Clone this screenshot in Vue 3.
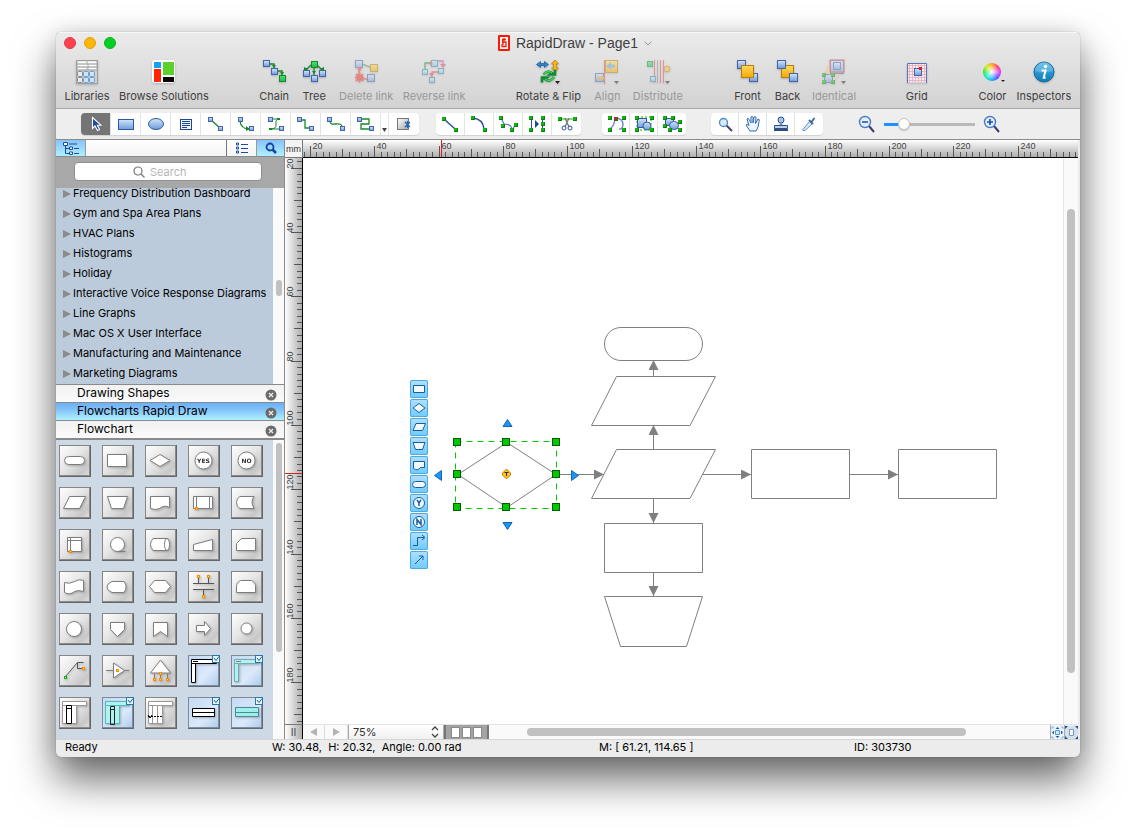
<script setup>
import { computed, onBeforeUnmount, onMounted, ref } from 'vue'

const node = (x, y, s = 5, kind = 'b') => {
  const fill = { b: 'url(#gBlue)', g: 'url(#gGreen)', o: 'url(#gGold)', c: 'url(#gCyan)' }[kind]
  const edge = { b: '#4463a8', g: '#128a32', o: '#b97d10', c: '#3d83a8' }[kind]
  return `<rect x="${x + 0.5}" y="${y + 0.5}" width="${s}" height="${s}" fill="${fill}" stroke="${edge}"/>`
}
const dot = (x, y, color = '#12b212') =>
  `<rect x="${x}" y="${y}" width="4" height="4" fill="${color}"/><path d="M${x + 3.5} ${y}v3.500h-3.500" fill="none" stroke="#0b7d0b"/>`
const wire = (d, color = '#138a28', w = 1.3) => `<path d="${d}" fill="none" stroke="${color}" stroke-width="${w}"/>`
const solid = (d, color) => `<path d="${d}" fill="${color}"/>`
const more = solid('M20 22h5l-2.500 3z', '#222')

const gridCells = [0, 1, 2]
  .map((c) => [0, 1].map((r) => `<rect x="${3.5 + c * 6}" y="${12.5 + r * 6}" width="5" height="5" rx="1" fill="${c ? '#cfe3f6' : '#e9e9e9'}" stroke="${c ? '#6c9fce' : '#8c8c8c'}"/>`).join(''))
  .join('')
const gridLines = [6, 9, 12, 15, 18, 21]
  .map((p) => `<path d="M${p - 0.5} 5v18M4 ${p}.500h18" stroke="#eab4c0" stroke-width="1"/>`)
  .join('')

const art = {
  libraries: `<rect x="2.500" y="1.500" width="21" height="23" fill="#d0d0d0" stroke="#a0a0a0"/><path d="M4 3.500h8m2 0h8M4 6.500h9m2 0h7M4 9.500h8m3 0h7" stroke="#fff" stroke-width="2"/><path d="M3 5h20M3 8h20M3 11h20" stroke="#a0a0a0"/>${gridCells}`,
  browse: `<rect x="1" y="1" width="23" height="23" rx="3" fill="#fff"/><path d="M3 3h7v6H3z" fill="#14a0f5"/><path d="M12 3h11v13H12z" fill="#5bd22c"/><path d="M3 10h7v13H3z" fill="#ff2404"/><path d="M12 18h11v5H12z" fill="#000"/>`,
  chain: wire('M8 5h5v4M17 12h4v5') + solid('M11 6h4l-2 3zM19 13h4l-2 3z', '#138a28') + node(2, 1, 6) + node(10, 9, 6) + node(18, 16, 6, 'g'),
  tree: wire('M10 6l-5 5M16 6l5 5M13 8v8') + solid('M3 8v5l4-3zM23 8v5l-4-3zM11 12h4l-2 3z', '#138a28') + node(10, 2, 6, 'g') + node(2, 11, 6) + node(10, 16, 6) + node(18, 11, 6),
  delete: wire('M9 5l8 3') + wire('M6 8v12h10', '#e4473c', 1.5) + node(2, 1, 7) + node(17, 5, 7, 'o') + node(14, 15, 7) + wire('M3 15l7 7M10 15l-7 7M6.500 13.500v10M2 18.500h9', '#e43326', 2) + '<circle cx="6.500" cy="10" r="2" fill="#e4473c"/>',
  reverse: wire('M4 10V4h6') + wire('M16 2h6v4', '#c04ab5') + wire('M18 13h-7v6', '#e4473c') + node(10, 1, 6, 'c') + node(1, 10, 5, 'c') + node(17, 9, 5, 'c') + node(8, 18, 5, 'c') + solid('M9 2l3 2-3 3zM19 5h6l-3 4zM8 14h5l-2.500 4z', '#d24a55'),
  rotate: '<path d="M1.500 5.500l4-3v2h4v-2l4 3-4 3v-2h-4v2z" fill="#2b86cf" stroke="#125a9c" stroke-width=".7"/><path d="M20 1l3.500 4h-2v4h2L20 13l-3.500-4h2V5h-2z" fill="#f8b81c" stroke="#b97d10" stroke-width=".8"/><path d="M8.500 15.500q4-5 8.500-1.500l-2 1.500h5v-5M19 18q-4 6-9 2l2-1.500H7v5" fill="none" stroke="#128a32" stroke-width="2.600"/><path d="M8.500 15.500q4-5 8.500-1.500M19 18q-4 6-9 2" fill="none" stroke="#3fd45d" stroke-width="1.400"/>' + more,
  align: node(11, 1, 12, 'o') + node(1, 14, 8) + wire('M10.500 1v24', '#dd4a50', 1) + solid('M12 7l5-4v2.500h4v3h-4V11z', '#6aa6d8') + solid('M11 19l-4-3v2H3v2h4v2z', '#f0a51c') + more,
  distribute: wire('M9.500 1v23M15.500 1v23M18.500 1v23', '#dd4a50', 1) + wire('M12.500 1v23', '#8a8a8a', 1) + node(2, 2, 5, 'g') + node(5, 17, 5, 'c') + '<circle cx="22" cy="10" r="3" fill="#f7c437" stroke="#b97d10"/>' + more,
  front: node(2, 1, 8) + node(14, 14, 8) + node(6, 6, 12, 'o'),
  back: node(6, 6, 12, 'o') + node(2, 1, 8) + node(14, 14, 8),
  identical: '<path d="M9 2L3 15l8 7L23 12z" fill="#f4c896"/>' + node(9, 1, 13) + '<rect x="9" y="1" width="14" height="12" fill="none" stroke="#d93b3b"/>' + node(3, 15, 8) + node(12, 3, 7) + dot(1, 14) + dot(10, 14) + dot(1, 21) + dot(10, 21) + more,
  grid: `<rect x="3.500" y="4.500" width="19" height="19" fill="#f3eef5"/>${gridLines}<path d="M3.500 24V4.500h19V24" fill="none" stroke="#5877b8"/>${node(10, 9, 7)}<path d="M15 8h3v3h-3z" fill="#d11f2c"/>`,
  color: '',
  inspectors: '<circle cx="13" cy="13" r="10" fill="url(#gInfo)" stroke="#17689c"/><path d="M4 12a9 9 0 0118 0q-9 3-18 0" fill="#fff" opacity=".22"/><circle cx="14.500" cy="7.500" r="1.700" fill="#fff"/><path d="M10.500 11.500h4l-1.800 7.200h2" fill="none" stroke="#fff" stroke-width="2"/>',

  cursor: '<path d="M8.500 4.500v11l2.500-2.500 2.500 4.500 2-1-2.200-4.300h3.700z" fill="#1f4a9e" stroke="#fff" stroke-width="1.100"/>',
  rect: '<rect x="4.500" y="6.500" width="15" height="10" fill="url(#gBlue)" stroke="#2c5aa6"/>',
  ellipse: '<ellipse cx="12" cy="11" rx="7.500" ry="5.500" fill="url(#gBlue)" stroke="#2c5aa6"/>',
  text: '<rect x="6.500" y="6.500" width="11" height="10" fill="#eef4fc" stroke="#1d4794"/><path d="M8 8.500h8M8 10.500h8M8 12.500h8M8 14.500h5" stroke="#1d4794"/>',
  direct: wire('M7 7l9 8') + node(4, 4, 4) + node(14, 13, 4),
  arc: wire('M6 8q1 8 9 8') + solid('M12 13l4 3-4 2z', '#138a28') + node(4, 4, 4) + node(15, 13, 4),
  bezier: wire('M5 6h11q-5 0-4 5t-6 5h9', '#138a28', 1) + node(4, 4, 4) + node(15, 13, 4) + solid('M13 5h3v2h-3zM5 15h3v2H5z', '#138a28'),
  smart: wire('M6 7h5v8h5') + node(3, 4, 4) + node(15, 13, 4),
  spline: wire('M6 8q0 4 5 3 7-1 7 3') + node(3, 4, 4) + node(16, 13, 4),
  round: wire('M7 6h8v5H7v5h9') + node(3, 4, 4) + node(15, 13, 4),
  add: '<rect x="5.500" y="5.500" width="11" height="11" fill="url(#gGray)" stroke="#777"/><path d="M13 9l5 5M18 9l-5 5M15.500 8v7" stroke="#1a66b8" stroke-width="1.200"/>',
  line: wire('M6 6l11 10', '#2b50a3', 1.5) + dot(4, 4) + dot(16, 15),
  curve: wire('M6 5q10 1 11 11', '#2b50a3', 1.5) + dot(4, 3) + dot(16, 15),
  poly: wire('M5 5l3 6q8 0 8 6l4-6', '#5377bd', 1.2) + dot(3, 3) + dot(5, 11) + dot(14, 15) + dot(18, 10),
  mirror: wire('M6.500 5v12M17.500 5v12', '#2b50a3', 1) + solid('M10 7v8l4-4z', '#1d4794') + dot(4, 3) + dot(4, 15) + dot(16, 3) + dot(16, 9) + dot(16, 15),
  cut: wire('M5 6h14', '#12b212', 1) + wire('M10 5l4 9M14 5l-4 9', '#777', 1.3) + '<circle cx="9" cy="15" r="2" fill="none" stroke="#2b50a3"/><circle cx="15" cy="15" r="2" fill="none" stroke="#2b50a3"/>' + dot(3, 4) + dot(18, 4),
  spline2: wire('M5 16q5-1 6-11 8 0 8 7-1 5-4 4', '#6f8cc8', 1.4) + dot(4, 3) + dot(18, 3) + dot(4, 15) + dot(18, 15) + dot(10, 4, '#d11f2c'),
  union: '<rect x="5.500" y="5.500" width="9" height="9" fill="url(#gBlue)" stroke="#2c5aa6"/><circle cx="15" cy="13" r="4" fill="url(#gBlue)" stroke="#2c5aa6"/><path d="M5 4h14v13H5z" fill="none" stroke="#12b212" stroke-dasharray="2 2"/>' + dot(3, 3) + dot(18, 3) + dot(3, 15) + dot(18, 15),
  combine: '<rect x="5.500" y="5.500" width="8" height="7" fill="url(#gBlue)" stroke="#2c5aa6"/><rect x="9.500" y="8.500" width="9" height="8" rx="4" fill="url(#gBlue)" stroke="#2c5aa6"/>' + dot(3, 3) + dot(11, 3) + dot(3, 11) + dot(18, 7) + dot(8, 15) + dot(18, 15),
  lens: '<path d="M13 12l6 6" stroke="#3f4664" stroke-width="2"/><circle cx="10.500" cy="9.500" r="4" fill="#d6edfc" stroke="#4f87cc" stroke-width="1.300"/>',
  hand: '<path d="M9 18l-4-6q1-2 3 .500L6 6q1-2 2.500 1L10 10V4q1.500-1.500 2 .500V10l1-6q2-1 2 1l-.500 5.500L17 6q2 0 1 2.500L17 14l-2 4z" fill="#eef5fe" stroke="#2c68b6" stroke-width="1"/>',
  stamp: '<circle cx="12" cy="7" r="3" fill="#a9c5e8" stroke="#28508f"/><path d="M10.500 9.500h3v3h-3z" fill="#7899c6"/><path d="M5.500 12.500h13v3h-13z" fill="#bcd1eb" stroke="#28508f"/><path d="M5 16h14v2H5z" fill="#344c75"/>',
  dropper: '<path d="M12.500 8.500l2.500 2.500-7 6.500H6l-.500-.500z" fill="#d8ecfb" stroke="#5f8dc5"/><path d="M12 7l4 4M14.500 9l3-4" stroke="#4b6a9c" stroke-width="2"/>'
}

const toolbar = [
  [['libraries', 'Libraries', 46], ['browse', 'Browse Solutions', 92]],
  [['chain', 'Chain', 32], ['tree', 'Tree', 32], ['delete', 'Delete link', 56, true], ['reverse', 'Reverse link', 64, true]],
  [['rotate', 'Rotate & Flip', 68], ['align', 'Align', 34, true], ['distribute', 'Distribute', 51, true]],
  [['front', 'Front', 32], ['back', 'Back', 32], ['identical', 'Identical', 45, true]],
  [['grid', 'Grid', 24]],
  [['color', 'Color', 31], ['inspectors', 'Inspectors', 56]]
]

const tools = [
  ['cursor', 'rect', 'ellipse', 'text', 'direct', 'arc', 'bezier', 'smart', 'spline', 'round', 'drop', 'add'],
  ['line', 'curve', 'poly', 'mirror', 'cut'],
  ['spline2', 'union', 'combine'],
  ['lens', 'hand', 'stamp', 'dropper']
]
const active = ref('cursor')

const solutions = [
  'Frequency Distribution Dashboard', 'Gym and Spa Area Plans', 'HVAC Plans', 'Histograms', 'Holiday',
  'Interactive Voice Response Diagrams', 'Line Graphs', 'Mac OS X User Interface',
  'Manufacturing and Maintenance', 'Marketing Diagrams'
]
const libraries = ['Drawing Shapes', 'Flowcharts Rapid Draw', 'Flowchart']
const openLibrary = ref('Flowcharts Rapid Draw')

const pin = (x, y, c = '#ff8a00') => `<rect x="${x}" y="${y}" width="3" height="3" fill="${c}" stroke="none"/><rect x="${x + 1}" y="${y + 1}" width="1" height="1" fill="#ffe24a" stroke="none"/>`
const check = '<rect x="24.500" y=".500" width="7" height="7" fill="#e4f3fc" stroke="#2a78a8"/><path d="M26 3l2 2.500L31 1.500" fill="none" stroke="#17618f"/>'
const tiles = [
  ['Terminator', '<rect x="5.500" y="11.500" width="20" height="8" rx="4"/>'],
  ['Process', '<path d="M5.500 9.500h19v12h-19z"/>'],
  ['Decision', '<path d="M15 9.500l10 6-10 6-10-6z"/>'],
  ['Yes', '<circle cx="15.500" cy="15.500" r="8.500"/><text x="15.500" y="18">YES</text>'],
  ['No', '<circle cx="15.500" cy="15.500" r="8.500"/><text x="15.500" y="18">NO</text>'],
  ['Data', '<path d="M10.500 9.500h16l-6 12h-16z"/>'],
  ['Manual operation', '<path d="M5.500 9.500h20l-4 12h-12z"/>'],
  ['Document', '<path d="M5.500 9.500h19v11q-5-3-10 1-4 2-9 0z"/>'],
  ['Predefined process', '<path d="M5.500 9.500h19v12h-19zM8.500 9.500v12M21.500 9.500v12" />' + pin(7, 20)],
  ['Stored data', '<path d="M9 9.500h14q-4 5 0 12H9q-3.500-1.500-3.500-6T9 9.500z"/>'],
  ['Internal storage', '<path d="M8.500 8.500h14v14h-14zM8.500 11.500h14M11.500 8.500v14"/>' + pin(10, 21)],
  ['Sequential data', '<circle cx="15.500" cy="15.500" r="7"/><path d="M15.500 22.500h8"/>'],
  ['Direct data', '<path d="M8 9.500h15q3 6 0 12H8q-5-6 0-12z"/><ellipse cx="22" cy="15.500" rx="2.500" ry="6"/>'],
  ['Manual input', '<path d="M5.500 15.500l19-5v11h-19z"/>'],
  ['Card', '<path d="M10.500 9.500h14v12h-19v-7z"/>'],
  ['Paper tape', '<path d="M5.500 11.500q5 2 10-1 5-3 9-1v11q-5-2-9 0-5 4-10 1z"/>'],
  ['Display', '<path d="M10 10.500h12q4 5 0 11H10q-5-2-5-5.500t5-5.500z"/>'],
  ['Preparation', '<path d="M9.500 9.500h11l5 6-5 6h-11l-5-6z"/>'],
  ['Parallel mode', '<path d="M5 12.500h21M5 18.500h21M10.500 7v5M20.500 7v5M15.500 19v6" stroke="#555"/>' + pin(9, 4) + pin(19, 4) + pin(14, 24)],
  ['Loop limit', '<path d="M9.500 9.500h11q4 2 4 5v7h-19v-7q0-3 4-5z"/>'],
  ['Connector', '<circle cx="15" cy="16" r="7.500"/>'],
  ['Off-page connector', '<path d="M8.500 9.500h14v7l-7 7-7-7z"/>'],
  ['Bookmark', '<path d="M8.500 9.500h14v14l-7-5-7 5z"/>'],
  ['Arrow', '<path d="M8.500 12.500h8v-4l6 7-6 7v-4h-8z"/>'],
  ['On-page connector', '<circle cx="15.500" cy="15.500" r="5.500"/>'],
  ['Callout', '<path d="M6 22L18.500 7.500h6M18.500 7.500v6h5" fill="none" stroke="#555"/>' + pin(5, 21, '#00b515') + pin(23, 12)],
  ['Transfer', '<path d="M4 15.500h23" /><path d="M11.500 8v15l11-7.500z"/>' + pin(14, 14)],
  ['Merge', '<path d="M15.500 5l10 13h-20zM9.500 19v4M15.500 18v5M22.500 19v4"/>' + pin(14, 17) + pin(8, 23) + pin(14, 23) + pin(21, 23)],
  ['Horizontal swimlane', '<path d="M3.500 4.500h25v4h-25zM3.500 8.500h4v19h-4z" stroke="#000"/><path d="M5 6.500h5" stroke="#000"/>', 'blue'],
  ['Swimlane', '<path d="M3.500 4.500h25v4h-25zM3.500 8.500h4v18h-4z" fill="#b0f3ee" stroke="#79a9b0"/><path d="M5 6.500h5"/>', 'blue'],
  ['Lane columns', '<path d="M3.500 4.500h24v4h-24zM3.500 8.500h14v18h-14zM12.500 8.500v18" stroke="#999"/><path d="M7.500 8.500h5v18h-5zM7.500 11.500h5" stroke="#000"/>'],
  ['Colored lanes', '<path d="M3.500 4.500h24v4h-24zM3.500 8.500h14v18h-14zM12.500 8.500v18" fill="#b0f3ee" stroke="#54b9bb"/><path d="M8.500 9.500h4v18h-4zM8.500 12.500h4" fill="none" stroke="#222"/>', 'blue'],
  ['Separator', '<path d="M3.500 4.500h24v4h-24zM3.500 8.500h14v18h-14zM7.500 8.500v18M12.500 8.500v18" stroke="#999"/><path d="M3 19.500h15" stroke="#000" stroke-dasharray="2 1"/><path d="M3 18l2 3 2-3" fill="none" stroke="#000"/>'],
  ['Row lane', '<path d="M4.500 11.500h22v8h-22zM4.500 15.500h22" stroke="#000"/>', 'blue'],
  ['Colored row', '<path d="M4.500 10.500h23v9h-23zM4.500 15.500h23" fill="#9df0e9" stroke="#4f8a92"/>', 'blue']
]

const quick = [
  ['Process', '<path d="M3.500 5.500h11v7h-11z"/>'],
  ['Decision', '<path d="M9 4.500l6 4.500-6 4.500L3 9z"/>'],
  ['Data', '<path d="M6 5.500h9.500l-3 7H3z"/>'],
  ['Manual operation', '<path d="M3 5.500h12l-2.500 7h-7z"/>'],
  ['Document', '<path d="M3.500 5.500h11v6h-4q-3 4-7 1z"/>'],
  ['Terminator', '<rect x="2.500" y="6.500" width="13" height="6" rx="3"/>'],
  ['Yes', '<circle cx="9" cy="9" r="5.500"/><path d="M7 6l2 3 2-3M9 9v3" stroke-width="1.500"/>'],
  ['No', '<circle cx="9" cy="9" r="5.500"/><path d="M7 12V6.500l4 5V6" stroke-width="1.500" fill="none"/>'],
  ['Smart connector', '<path d="M3 13.500h4.500v-8H14M12 3l3 2.500L12 8" fill="none"/>'],
  ['Direct connector', '<path d="M5 13l8-8M9 5h4v4" fill="none"/>']
]

const PITCH = 3.216
const xAt = (mm) => Math.round(7 + (mm - 20) * PITCH) + 0.5
const yAt = (mm) => Math.round(74 + (mm - 40) * PITCH) + 0.5
const size = (mm) => (mm % 20 === 0 ? 11 : mm % 10 === 0 ? 8 : 5)

const canvas = ref(null)
const area = ref({ w: 0, h: 0 })
const measure = () => {
  area.value = { w: canvas.value.clientWidth + 15, h: canvas.value.clientHeight }
}
onMounted(() => {
  measure()
  window.addEventListener('resize', measure)
})
onBeforeUnmount(() => window.removeEventListener('resize', measure))
const range = (at, limit) => {
  const out = []
  for (let mm = 16; at(mm) < limit; mm += 2) if (at(mm) > 0) out.push(mm)
  return out
}
const ticksX = computed(() => range(xAt, area.value.w))
const ticksY = computed(() => range(yAt, area.value.h))
const labelsX = computed(() => ticksX.value.filter((mm) => mm % 20 === 0 && xAt(mm) + 20 < area.value.w))
const labelsY = computed(() => ticksY.value.filter((mm) => mm % 20 === 0))

const handles = [[457, 442], [506, 442], [556, 442], [457, 474], [556, 474], [457, 507], [506, 507], [556, 507]]
const selection = 'W: 30.48,\u00a0 H: 20.32,\u00a0 Angle: 0.00 rad'
const search = ref('')
const zoom = ref(18)
</script>

<template>
  <div class="desktop">
    <svg class="defs" width="0" height="0" aria-hidden="true">
      <defs>
        <linearGradient id="gBlue" x2="0" y2="1"><stop stop-color="#d3e4f8" /><stop offset="1" stop-color="#6d9ddb" /></linearGradient>
        <linearGradient id="gGreen" x2="0" y2="1"><stop stop-color="#4fe070" /><stop offset="1" stop-color="#22b84a" /></linearGradient>
        <linearGradient id="gGold" x2="0" y2="1"><stop stop-color="#ffd95e" /><stop offset="1" stop-color="#f5a800" /></linearGradient>
        <linearGradient id="gCyan" x2="0" y2="1"><stop stop-color="#c9eefb" /><stop offset="1" stop-color="#6cbde0" /></linearGradient>
        <linearGradient id="gGray" x2="1" y2="1"><stop stop-color="#fff" /><stop offset="1" stop-color="#a5a5a5" /></linearGradient>
        <linearGradient id="gInfo" x2="0" y2="1"><stop stop-color="#47b5e8" /><stop offset="1" stop-color="#0d7ab9" /></linearGradient>
      </defs>
    </svg>

    <main class="window">
      <header class="header">
        <div class="titlebar">
          <div class="lights">
            <button class="light red" aria-label="Close"></button>
            <button class="light amber" aria-label="Minimize"></button>
            <button class="light green" aria-label="Zoom"></button>
          </div>
          <h1 class="title">
            <svg width="12" height="16" viewBox="0 0 12 16"><rect width="12" height="16" rx="1" fill="#f41c06" /><path d="M2 2h8v12H2z" fill="#fff" /><path d="M8 4.500H4.500V7H8v4.500H4V9M6 3v3M7 7H5v3" fill="none" stroke="#f41c06" stroke-width="1.300" /></svg>
            <span>RapidDraw - Page1</span>
            <svg width="8" height="5" viewBox="0 0 8 5"><path d="M.5.5L4 4 7.500.5" fill="none" stroke="#999" /></svg>
          </h1>
        </div>
        <nav class="toolbar" aria-label="Main toolbar">
          <div v-for="(group, g) in toolbar" :key="g" class="group">
            <button v-for="[id, label, width, off] in group" :key="id" class="action" :class="{ off }" :style="{ width: width + 'px' }">
              <span v-if="id === 'color'" class="wheel-box"><span class="wheel"></span><span class="caret"></span></span>
              <svg v-else width="26" height="26" viewBox="0 0 26 26" v-html="art[id]"></svg>
              <span class="caption">{{ label }}</span>
            </button>
          </div>
        </nav>
      </header>

      <div class="tools">
        <div v-for="(group, g) in tools" :key="g" class="segment" :class="'seg' + g">
          <button v-for="id in group" :key="id" class="tool" :class="{ on: active === id, narrow: id === 'drop' }" :aria-label="id" @click="active = id">
            <svg v-if="id === 'drop'" width="5" height="22" viewBox="0 0 5 22"><path d="M0 15h5l-2.500 4z" fill="#444" /></svg>
            <svg v-else width="24" height="22" viewBox="0 0 24 22" v-html="art[id]"></svg>
          </button>
        </div>
        <div class="zoom">
          <button class="zoom-btn" aria-label="Zoom out">
            <svg width="18" height="18" viewBox="0 0 18 18"><path d="M11 11l5 6" stroke="#3d3c66" stroke-width="2" /><circle cx="7" cy="7" r="5.500" fill="#e3effc" stroke="#4a7bcb" stroke-width="1.400" /><path d="M4 7h6" stroke="#1d4fa5" stroke-width="1.700" /></svg>
          </button>
          <input v-model="zoom" class="slider" type="range" min="0" max="100" aria-label="Zoom level" />
          <button class="zoom-btn" aria-label="Zoom in">
            <svg width="18" height="18" viewBox="0 0 18 18"><path d="M11 11l5 6" stroke="#3d3c66" stroke-width="2" /><circle cx="7" cy="7" r="5.500" fill="#e3effc" stroke="#4a7bcb" stroke-width="1.400" /><path d="M4 7h6M7 4v6" stroke="#1d4fa5" stroke-width="1.700" /></svg>
          </button>
        </div>
      </div>

      <div class="body">
        <aside class="sidebar">
          <div class="tabs">
            <button class="tab lit" aria-label="Solutions tree">
              <svg width="18" height="14" viewBox="0 0 18 14"><path d="M3.500 4v8.500H7M3.500 7.500H7M7 3h8M12 7.500h5M12 12.500h5" fill="none" stroke="#1c4c9c" /><path d="M1.500 1.500h4v3h-4zM7.500 6h3v2.500h-3zM7.500 11h3v2.500h-3z" fill="#fff" stroke="#1c4c9c" /></svg>
            </button>
            <span class="tab-space"></span>
            <button class="tab" aria-label="List view">
              <svg width="14" height="12" viewBox="0 0 14 12"><path d="M1.500 1h2v2h-2zM1.500 5h2v2h-2zM1.500 9h2v2h-2z" fill="none" stroke="#1c4c9c" /><path d="M6 2.500h7M6 6.500h7M6 10.500h7" stroke="#1c4c9c" /></svg>
            </button>
            <button class="tab lit last" aria-label="Search panel">
              <svg width="14" height="14" viewBox="0 0 14 14"><circle cx="6" cy="6" r="3.500" fill="none" stroke="#1543a0" stroke-width="1.800" /><path d="M8.500 8.500l3.500 3.500" stroke="#1543a0" stroke-width="2.500" /></svg>
            </button>
          </div>
          <div class="search-band">
            <label class="search">
              <svg width="12" height="12" viewBox="0 0 12 12"><circle cx="5" cy="5" r="4" fill="none" stroke="#777" stroke-width="1.200" /><path d="M8 8l3.500 3.500" stroke="#777" stroke-width="1.200" /></svg>
              <input v-model="search" type="text" placeholder="Search" aria-label="Search" />
            </label>
          </div>
          <div class="tree">
            <ul class="tree-list">
              <li v-for="name in solutions" :key="name">
                <button class="branch"><svg width="8" height="10" viewBox="0 0 8 10"><path d="M0 1v8l8-4z" fill="#8b8b8b" /></svg>{{ name }}</button>
              </li>
            </ul>
            <div class="rail"><span class="thumb small"></span></div>
          </div>
          <ul class="libs">
            <li v-for="lib in libraries" :key="lib" class="lib" :class="{ lit: lib === openLibrary }">
              <button class="lib-name" @click="openLibrary = lib">{{ lib }}</button>
              <button class="lib-close" :aria-label="'Close ' + lib">
                <svg width="12" height="12" viewBox="0 0 12 12"><circle cx="6" cy="6" r="5.500" fill="#6b6b6b" /><path d="M4 4l4 4M8 4L4 8" stroke="#eee" stroke-width="1.200" /></svg>
              </button>
            </li>
          </ul>
          <div class="palette">
            <div class="tiles">
              <button v-for="[name, shape, tone] in tiles" :key="name" class="tile" :class="tone" :aria-label="name">
                <svg width="32" height="32" viewBox="0 0 32 32" v-html="shape"></svg>
                <svg v-if="tone" class="badge" width="32" height="32" viewBox="0 0 32 32" v-html="check"></svg>
              </button>
            </div>
            <div class="rail"><span class="thumb tall"></span></div>
          </div>
        </aside>

        <section class="work">
          <div class="unit">mm</div>
          <svg class="ruler-x">
            <path v-for="mm in ticksX" :key="mm" :d="`M${xAt(mm)} 17v-${size(mm)}`" stroke="#555" />
            <text v-for="mm in labelsX" :key="'l' + mm" :x="xAt(mm) + 2" y="9">{{ mm }}</text>
            <path d="M138.500 0v17" stroke="#e02020" />
          </svg>
          <svg class="ruler-y">
            <path v-for="mm in ticksY" :key="mm" :d="`M17 ${yAt(mm)}h-${size(mm)}`" stroke="#555" />
            <text v-for="mm in labelsY" :key="'l' + mm" :transform="`translate(8 ${yAt(mm)}) rotate(-90)`">{{ mm }}</text>
            <path d="M0 315.500h17" stroke="#e02020" />
          </svg>
          <div ref="canvas" class="canvas">
            <svg class="drawing">
              <defs>
                <marker id="tip" markerUnits="userSpaceOnUse" markerWidth="11" markerHeight="11" refX="10" refY="5" orient="auto"><path d="M0 0l10 5-10 5z" fill="#808080" /></marker>
              </defs>
              <g transform="translate(-303 -158)">
                <g fill="#fff" stroke="#808080">
                  <rect x="604.5" y="327.500" width="98" height="33" rx="16.500" />
                  <path d="M616.500 376.500h99l-25.500 49h-98.500zM616.500 449.500h99l-25.500 49h-98.500z" />
                  <path d="M751.500 449.500h98v49h-98zM898.500 449.500h98v49h-98zM604.500 523.500h98v49h-98z" />
                  <path d="M604.500 596.500h98l-16 50h-66zM507 442.500l49 32-49 33-49-33z" />
                </g>
                <g stroke="#808080">
                  <path d="M653.500 376v-16" marker-end="url(#tip)" /><path d="M653.500 449v-24" marker-end="url(#tip)" />
                  <path d="M653.500 499v24" marker-end="url(#tip)" /><path d="M653.500 573v23" marker-end="url(#tip)" />
                  <path d="M557 474.500h47" marker-end="url(#tip)" /><path d="M703 474.500h48" marker-end="url(#tip)" />
                  <path d="M850 474.500h48" marker-end="url(#tip)" />
                </g>
                <rect x="455.5" y="441.500" width="101" height="67" fill="none" stroke="#0c0" stroke-dasharray="6 5" />
                <g fill="#00c800" stroke="#045c04"><rect v-for="[x, y] in handles" :key="x + '-' + y" :x="x - 3.5" :y="y - 3.5" width="7" height="7" /></g>
                <path d="M506.500 469l4 4v2l-4 4-4-4v-2z" fill="#ffc020" stroke="#c88400" /><path d="M504.500 472.500h4M506.500 472v4" stroke="#333" />
                <g fill="#1a97ee" stroke="#1264bd"><path d="M507.500 419.500l4.500 7h-9zM507.500 529.500l-4.500-7h9zM434.500 475.500l7-5v10zM578.500 475.500l-7-5v10z" /></g>
              </g>
            </svg>
            <div class="quick">
              <button v-for="[name, shape] in quick" :key="name" :aria-label="name"><svg width="18" height="18" viewBox="0 0 18 18" v-html="shape"></svg></button>
            </div>
          </div>
          <div class="vscroll"><span></span></div>
          <div class="pause">II</div>
          <div class="footbar">
            <button class="page-step" aria-label="Previous page"><svg width="7" height="8" viewBox="0 0 7 8"><path d="M7 0v8L0 4z" fill="#b4b4b4" /></svg></button>
            <button class="page-step" aria-label="Next page"><svg width="7" height="8" viewBox="0 0 7 8"><path d="M0 0v8l7-4z" fill="#b4b4b4" /></svg></button>
            <div class="scale">
              <select aria-label="Scale"><option>75%</option><option>100%</option></select>
              <svg width="8" height="12" viewBox="0 0 8 12"><path d="M1 4l3-3 3 3M1 8l3 3 3-3" fill="none" stroke="#444" stroke-width="1.300" /></svg>
            </div>
            <div class="pages"><button aria-label="Page 1"></button><button aria-label="Page 2"></button><button aria-label="Page 3"></button></div>
            <div class="hscroll"><span></span></div>
            <button class="fit" aria-label="Fit drawing"><svg width="13" height="13" viewBox="0 0 13 13"><path d="M1 3V1h2M10 1h2v2M12 10v2h-2M3 12H1v-2" fill="none" stroke="#8fb0dc" /><path d="M4.500 4.500h4v4h-4z" fill="#cbeefc" stroke="#4a9bcc" /><path d="M6.500 1l2 2h-4zM6.500 12l-2-2h4zM1 6.500l2-2v4zM12 6.500l-2-2v4z" fill="#1c55ad" /></svg></button>
            <button class="fit" aria-label="Fit page"><svg width="13" height="13" viewBox="0 0 13 13"><path d="M0 0h13v13H0z" fill="#d4dfef" /><path d="M0 0h3L0 3zM13 0h-3l3 3zM0 13h3l-3-3zM13 13h-3l3-3z" fill="#1c4b99" /><path d="M4.500 3.500h4v6h-4z" fill="#fff" stroke="#8096bd" /></svg></button>
          </div>
        </section>
      </div>

      <footer class="status">
        <span>Ready</span><span>{{ selection }}</span><span>M: [ 61.21, 114.65 ]</span><span>ID: 303730</span>
      </footer>
    </main>
  </div>
</template>

<style>
body { background: #fff; }
</style>

<style scoped>
* { box-sizing: border-box; }
button, input, select { font: inherit; color: inherit; margin: 0; padding: 0; border: 0; background: none; border-radius: 0; }
svg { display: block; flex: none; }
ul { list-style: none; margin: 0; padding: 0; }
.defs { position: absolute; }
.desktop { min-height: 100vh; padding: 32px 56px 80px; display: flex; overflow: hidden; font: 11px Inter, "Liberation Sans", Arial, sans-serif; color: #000; }
.window { flex: 1; min-width: 0; display: flex; flex-direction: column; border-radius: 5px; overflow: hidden; background: #ececec; box-shadow: 0 0 1px rgba(0, 0, 0, .5), 0 22px 42px rgba(0, 0, 0, .6), 0 0 20px rgba(0, 0, 0, .1); }

.header { background: linear-gradient(#ebebeb, #d2d2d2); border-bottom: 1px solid #a9a9a9; box-shadow: inset 0 1px #f7f7f7; height: 77px; }
.titlebar { display: flex; align-items: center; height: 22px; padding: 0 8px; }
.lights { display: flex; gap: 8px; flex: 1; }
.titlebar::after { content: ""; flex: 1; }
.light { width: 12px; height: 12px; border-radius: 50%; }
.red { background: #fc4251; border: 1px solid #e33845; }
.amber { background: #fdb70a; border: 1px solid #e3a109; }
.green { background: #06ce23; border: 1px solid #07b41f; }
.title { display: flex; align-items: center; gap: 6px; margin: 0; padding-left: 14px; font: 400 14px "Liberation Sans", Arial, sans-serif; color: #3f3f3f; }
.toolbar { display: flex; justify-content: space-between; padding: 5px 8px 0; }
.group { display: flex; gap: 8px; }
.action { display: flex; flex-direction: column; align-items: center; gap: 4px; color: #3f3f3f; }
.action svg { filter: drop-shadow(0 1px 1px rgba(0, 0, 0, .2)); }
.off { color: #989898; }
.off svg { opacity: .5; }
.caption { white-space: nowrap; line-height: 14px; }
.wheel-box { display: block; position: relative; width: 26px; height: 26px; padding: 4px; }
.wheel { display: block; width: 18px; height: 18px; border-radius: 50%; background: radial-gradient(#fff, rgba(255, 255, 255, 0) 70%), conic-gradient(#ff9d00, #ff2a55, #e52cff, #4a3cff, #00a8ff, #00efc0, #22e344, #c8f000, #ff9d00); }
.caret { position: absolute; right: 0; bottom: 1px; border: 2px solid transparent; border-top-color: #222; }

.tools { display: flex; align-items: center; height: 31px; padding: 0 79px 0 25px; background: #efeeef; border-bottom: 1px solid #8b8b8b; }
.segment { display: flex; height: 22px; border-radius: 4px; overflow: hidden; background: #fff; box-shadow: 0 1px 1px rgba(0, 0, 0, .12); }
.seg1 { margin-left: 17px; }
.seg2 { margin-left: 21px; }
.seg3 { margin-left: 25px; }
.tool { width: 28px; display: flex; justify-content: center; border-right: 1px solid #e3e3e3; }
.tool:last-child { border-right: 0; }
.seg0 .tool { width: 30px; }
.seg1 .tool { width: 29px; }
.seg0 .narrow { width: 8px; }
.on { background: #757575; }
.zoom { display: flex; align-items: center; gap: 8px; margin-left: auto; }
.zoom-btn { width: 18px; height: 18px; }
.slider { width: 91px; height: 14px; appearance: none; background: linear-gradient(90deg, #1e90ff 22%, #b9b9b9 22%) center / 100% 3px no-repeat; }
.slider::-webkit-slider-thumb { appearance: none; width: 12px; height: 12px; border-radius: 50%; background: #fff; border: 1px solid #c4c4c4; box-shadow: 0 1px 1px rgba(0, 0, 0, .2); }

.body { flex: 1; display: flex; min-height: 0; }
.sidebar { width: 229px; flex: none; display: flex; flex-direction: column; border-right: 1px solid #8a8a8a; }
.tabs { display: flex; height: 17px; border-bottom: 1px solid #8a8a8a; background: linear-gradient(#fff, #f4f4f4); }
.tab { width: 30px; display: flex; align-items: center; justify-content: center; border-right: 1px solid #9a9a9a; }
.tab.last { width: 27px; border-right: 0; }
.lit { background: linear-gradient(#86c3fb, #aef0ff); }
.tab-space { flex: 1; border-right: 1px solid #777; }
.search-band { height: 31px; padding: 5px 22px 0 18px; background: #a8a8a8; }
.search { display: flex; align-items: center; gap: 5px; height: 19px; padding-left: 58px; background: #fff; border: 1px solid #8f8f8f; border-radius: 4px; }
.search input { flex: 1; min-width: 0; outline: 0; }
.search input::placeholder { color: #b5b5b5; opacity: 1; }
.tree { display: flex; height: 196px; overflow: hidden; background: #bccbdb; }
.tree-list { flex: 1; min-width: 0; margin-top: -5px; }
.branch { display: flex; align-items: center; gap: 2px; height: 20px; padding-left: 7px; white-space: nowrap; }
.branch svg { margin-top: 2px; }
.rail { width: 11px; background: #fafafa; flex: none; }
.thumb { display: block; width: 6px; margin-left: 3px; border-radius: 3px; background: #c1c1c1; }
.small { height: 16px; margin-top: 92px; }
.tall { height: 70%; margin-top: 3px; }
.lib { display: flex; align-items: center; height: 18px; padding: 0 7px 0 21px; border-top: 1px solid #8a8a8a; background: linear-gradient(#f2f2f2, #fafafa); }
.lib.lit { background: linear-gradient(#69b1f8, #84c2fa 40%, #aef3ff); }
.lib-name { flex: 1; text-align: left; font-size: 12px; line-height: 14px; padding-bottom: 2px; }
.lib-close { padding-top: 2px; }
.palette { flex: 1; display: flex; border-top: 2px solid #8a8a8a; background: #cddae5; }
.tiles { flex: 1; display: grid; grid-template-columns: repeat(5, 32px); gap: 10px 11px; padding: 5px 0 0 3px; align-content: start; }
.tile { position: relative; width: 32px; height: 32px; background: linear-gradient(135deg, #fff, #e6e6e6 45%, #c8c8c8 78%, #e6e6e6); box-shadow: inset -1px -1px #666, inset -2px -2px #8a8a8a, inset 1px 1px #858585; }
.tile.blue { background: linear-gradient(135deg, #c3d9f4, #dbe9fa 60%, #a9c7ea); box-shadow: inset -1px -1px #5d6a78, inset -2px -2px #7e8d9d, inset 1px 1px #7d8a98; }
.tile svg { fill: #fff; stroke: #7d7d7d; filter: drop-shadow(1px 1px 1px rgba(0, 0, 0, .25)); }
.tile .badge { position: absolute; top: 0; left: 0; filter: none; }
.tile :deep(text) { font: bold 6px "DejaVu Sans", sans-serif; fill: #333; stroke: none; text-anchor: middle; }

.work { flex: 1; min-width: 0; display: grid; grid-template: 18px 1fr 15px / 18px minmax(0, 1fr) 15px; padding-right: 2px; }
.unit { display: grid; place-items: center; font: 9px "Liberation Sans", Arial, sans-serif; color: #333; background: #f4f4f4; border-right: 1px solid #777; border-bottom: 1px solid #777; }
.ruler-x { grid-column: 2 / 4; width: 100%; height: 18px; background: linear-gradient(#fff, #adadad); border-bottom: 1px solid #000; }
.ruler-y { grid-column: 1; grid-row: 2; width: 18px; height: 100%; background: linear-gradient(90deg, #fff, #adadad); border-right: 1px solid #000; }
.ruler-x text, .ruler-y text { font: 9px "Liberation Sans", Arial, sans-serif; fill: #444; }
.canvas { grid-column: 2; grid-row: 2; position: relative; background: #fff; min-height: 0; }
.drawing { position: absolute; inset: 0; width: 100%; height: 100%; }
.quick { position: absolute; left: 107px; top: 222px; display: grid; gap: 1px; }
.quick button { width: 18px; height: 18px; border-radius: 2px; background: linear-gradient(#b2e0fd, #6dcbff); box-shadow: inset 0 0 0 1px #4ea9df; }
.quick svg { fill: #f4f9fd; stroke: #155f9f; }
.vscroll { grid-column: 3; grid-row: 2; background: #fafafa; border-left: 1px solid #e5e5e5; display: flex; flex-direction: column; align-items: center; padding-top: 51px; }
.vscroll span { width: 8px; height: 90%; border-radius: 4px; background: #c1c1c1; }
.pause { display: grid; place-items: center; font: 10px "Liberation Sans", Arial, sans-serif; color: #444; background: linear-gradient(90deg, #fff, #adadad); border-top: 1px solid #777; border-right: 1px solid #000; }
.footbar { grid-column: 2 / 4; display: flex; background: #fafafa; border-top: 1px solid #e2e2e2; }
.page-step { width: 22px; display: grid; place-items: center; border-right: 1px solid #ddd; }
.page-step + .page-step { width: 23px; }
.scale { position: relative; width: 96px; display: flex; background: linear-gradient(#fff, #f0f0f0); border: 1px solid #aaa; border-width: 0 1px; }
.scale select { width: 100%; appearance: none; padding-left: 4px; line-height: 14px; color: #333; }
.scale svg { position: absolute; right: 4px; top: 1px; pointer-events: none; }
.pages { width: 45px; display: flex; align-items: center; justify-content: center; gap: 2px; background: #a3a3a3; border: 1px solid #777; border-width: 0 2px; }
.pages button { width: 9px; height: 11px; background: #fff; border: 1px solid #8a8a8a; }
.hscroll { flex: 1; display: flex; align-items: center; padding-left: 38px; }
.hscroll span { width: 84%; height: 8px; border-radius: 4px; background: #c1c1c1; }
.fit { width: 14px; height: 14px; background: #eef3f9; border-left: 1px solid #aaa; }

.status { height: 18px; display: grid; grid-template-columns: 207px 327fr 255fr 226fr; align-items: center; padding: 0 0 4px 9px; border-top: 1px solid #d5d5d5; white-space: nowrap; }
</style>
